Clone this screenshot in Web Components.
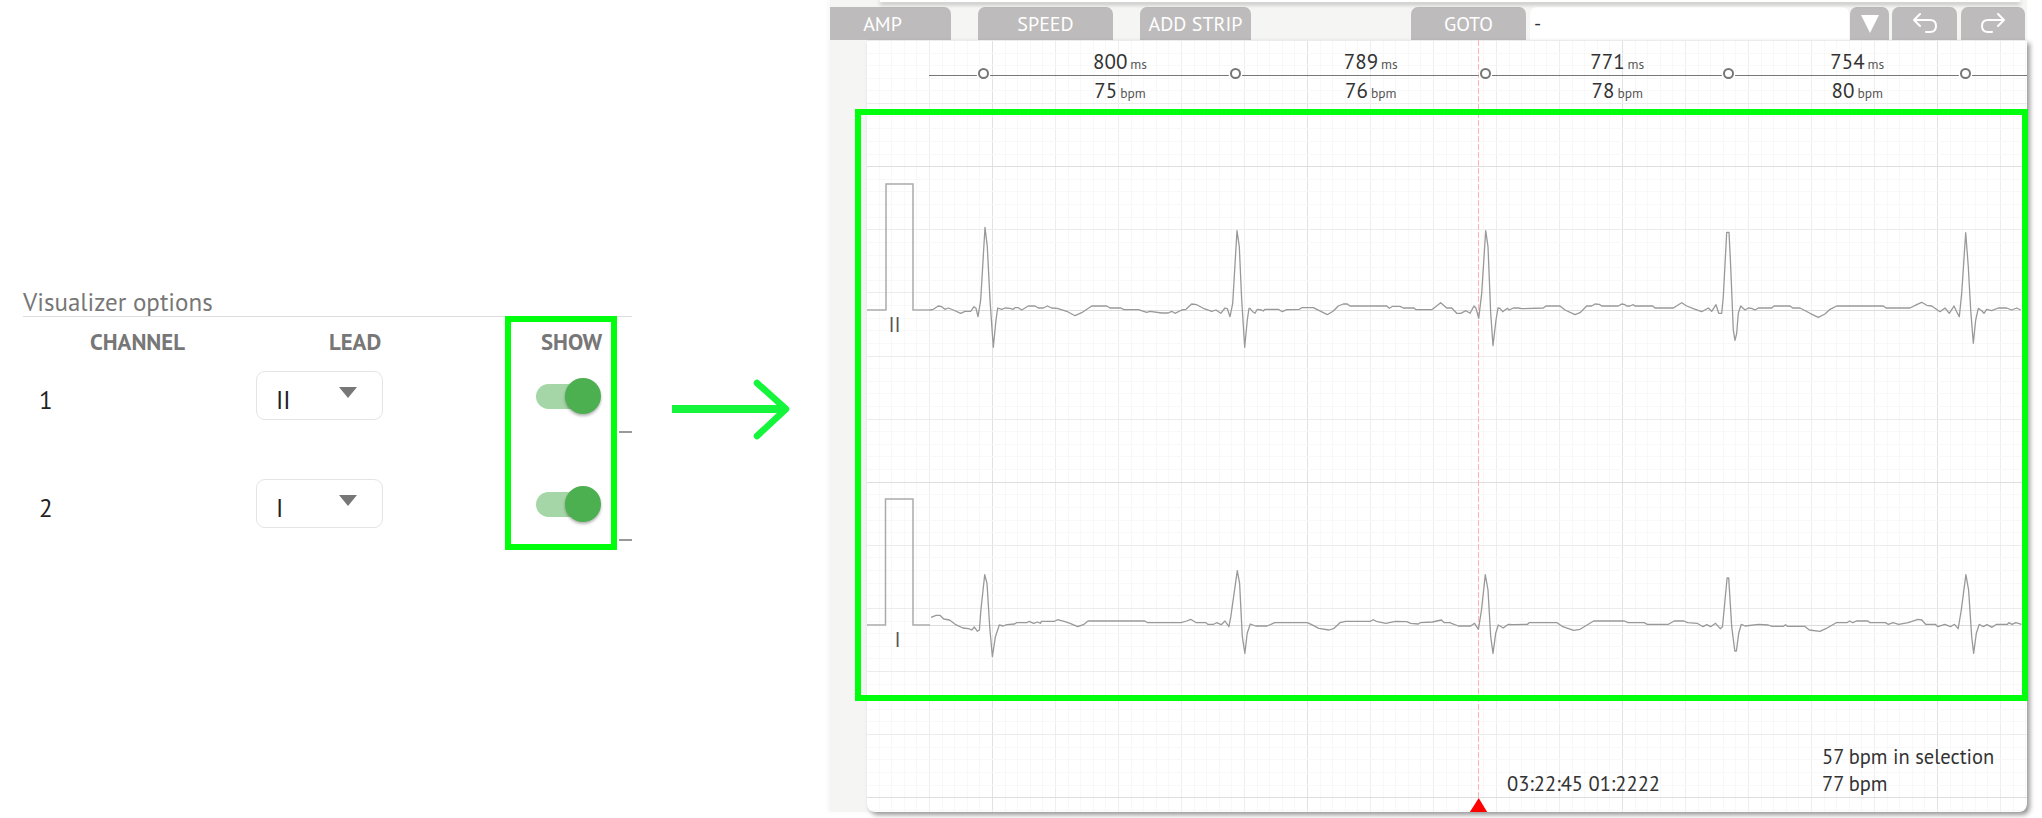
<!DOCTYPE html>
<html>
<head>
<meta charset="utf-8">
<title>Visualizer options</title>
<style>
  html, body { margin: 0; background: #fff; }
  body { width: 2042px; height: 818px; overflow: hidden; font-family: "PT Sans", Lato, sans-serif; }
</style>
</head>
<body>
<app-page>
  <viz-options slot="options" title="Visualizer options">
    <viz-row channel="1" lead="II"></viz-row>
    <viz-row channel="2" lead="I"></viz-row>
  </viz-options>
  <green-arrow slot="arrow"></green-arrow>
  <ecg-viewer slot="viewer">
    <ecg-toolbar slot="toolbar"></ecg-toolbar>
    <ecg-chart slot="chart"></ecg-chart>
  </ecg-viewer>
</app-page>

<script>
const FONT = '"PT Sans", Lato, sans-serif'

class appPage extends HTMLElement {
  constructor() {
    super()
    this.attachShadow({ mode: 'open' }).innerHTML = `
      <style>
        :host { display: flex; width: 2042px; height: 818px; font-family: ${FONT}; }
        .options { display: block; margin-left: 23px; width: 609px; padding-top: 291px; }
        .arrow { display: block; margin-left: 38px; width: 122px; padding-top: 378px; }
        .viewer { display: block; margin-left: 38px; }
      </style>
      <div class="options"><slot name="options"></slot></div>
      <div class="arrow"><slot name="arrow"></slot></div>
      <div class="viewer"><slot name="viewer"></slot></div>`
  }
}

class vizOptions extends HTMLElement {
  constructor() {
    super()
    this.attachShadow({ mode: 'open' }).innerHTML = `
      <style>
        :host { display: block; position: relative; width: 609px; }
        h2 { margin: 0; font: 400 25px/22px ${FONT}; color: #777; border-bottom: 1px solid #ddd; height: 25px; }
        .head { display: grid; grid-template-columns: 233px 280px 96px; height: 27px; padding-top: 13px;
                font: 700 22.8px/24px ${FONT}; color: #777; }
        .head span:nth-child(1) { padding-left: 67px; }
        .head span:nth-child(2) { padding-left: 73px; }
        .head span:nth-child(3) { padding-left: 5px; }
        .rows { display: flex; flex-direction: column; gap: 32px; }
        .hl { position: absolute; left: 482px; top: 25px; width: 100px; height: 222px; border: 6px solid #00ff0c; pointer-events: none; }
      </style>
      <h2>${this.getAttribute('title')}</h2>
      <div class="head"><span>CHANNEL</span><span>LEAD</span><span>SHOW</span></div>
      <div class="rows"><slot></slot></div>
      <div class="hl"></div>`
  }
}

class vizRow extends HTMLElement {
  constructor() {
    super()
    this.attachShadow({ mode: 'open' }).innerHTML = `
      <style>
        :host { display: grid; grid-template-columns: 233px 280px 83px 13px; height: 76px; font: 400 25px/24px ${FONT}; color: #222; }
        .num { padding: 31px 0 0 16px; }
        .sw { padding-top: 21px; }
        .dash { align-self: end; height: 2px; background: #999; }
      </style>
      <div class="num">${this.getAttribute('channel')}</div>
      <div><lead-select style="margin-top:14px">${this.getAttribute('lead')}</lead-select></div>
      <div class="sw"><toggle-switch></toggle-switch></div>
      <div class="dash"></div>`
  }
}

class leadSelect extends HTMLElement {
  constructor() {
    super()
    this.attachShadow({ mode: 'open' }).innerHTML = `
      <style>
        :host { display: flex; justify-content: space-between; box-sizing: border-box; width: 127px; height: 49px;
                border: 1px solid #e4e4e4; border-radius: 9px; padding: 16px 25px 0 19px; font: 400 25px/24px ${FONT}; color: #222; }
        i { width: 0; height: 0; margin-top: -1px; border-left: 9px solid transparent; border-right: 9px solid transparent; border-top: 11px solid #777; }
      </style>
      <span><slot></slot></span><i></i>`
  }
}

class toggleSwitch extends HTMLElement {
  constructor() {
    super()
    this.attachShadow({ mode: 'open' }).innerHTML = `
      <style>
        :host { display: block; position: relative; width: 65px; height: 36px; }
        .track { position: absolute; left: 0; top: 6px; width: 50px; height: 25px; border-radius: 13px; background: #a5d6a7; }
        .knob { position: absolute; left: 29px; top: 0; width: 36px; height: 36px; border-radius: 50%; background: #4caf50;
                box-shadow: 0 2px 3px rgba(0,0,0,.3); }
      </style>
      <div class="track"></div><div class="knob"></div>`
  }
}

class greenArrow extends HTMLElement {
  constructor() {
    super()
    this.attachShadow({ mode: 'open' }).innerHTML = `
      <style>:host { display: block; width: 122px; height: 62px; } svg { display: block; }</style>
      <svg width="122" height="62" viewBox="670 378 122 62" fill="none">
        <path d="M672 409H784" stroke="#14f53c" stroke-width="8"/>
        <path d="M757 383L786 409L757 436" stroke="#14f53c" stroke-width="6.5" stroke-linecap="round" stroke-linejoin="round"/>
      </svg>`
  }
}

class ecgViewer extends HTMLElement {
  constructor() {
    super()
    this.attachShadow({ mode: 'open' }).innerHTML = `
      <style>
        :host { display: flex; flex-direction: column; position: relative; width: 1197px; height: 812px;
                background: #f5f5f3; box-shadow: -2px 0 4px rgba(0,0,0,.04); }
        .top { position: absolute; left: 50px; top: 0; width: 1140px; height: 2px; background: #fff; box-shadow: 0 2px 4px rgba(0,0,0,.4); }
        .hl { position: absolute; left: 25px; top: 109px; width: 1161px; height: 580px; border: 6px solid #00ff0c; pointer-events: none; }
      </style>
      <div class="top"></div>
      <slot name="toolbar"></slot>
      <slot name="chart"></slot>
      <div class="hl"></div>`
  }
}

class toolBtn extends HTMLElement {
  constructor() {
    super()
    this.attachShadow({ mode: 'open' }).innerHTML = `
      <style>
        :host { display: flex; align-items: center; justify-content: center; height: 33px; flex: none; box-sizing: border-box;
                border-radius: 7px 7px 0 0; background: #bdbbbb; color: #fff; font: 400 20px/33px ${FONT}; }
        svg { display: block; }
        span { padding-top: 1px; }
      </style>
      <span><slot></slot></span>`
  }
}

class ecgToolbar extends HTMLElement {
  constructor() {
    super()
    this.attachShadow({ mode: 'open' }).innerHTML = `
      <style>
        :host { display: flex; height: 33px; padding-top: 7px; flex: none; }
        .in { width: 319px; margin: 0 1px 0 4px; background: #fff; border-radius: 7px 7px 0 0; box-sizing: border-box; padding-left: 4px;
              font: 400 20px/32px ${FONT}; color: #333; }
        svg { display: block; fill: none; stroke: #fff; stroke-width: 2; stroke-linecap: round; stroke-linejoin: round; }
      </style>
      <tool-btn style="width:121px;border-top-left-radius:0;padding-right:16px">AMP</tool-btn>
      <tool-btn style="width:135px;margin-left:27px">SPEED</tool-btn>
      <tool-btn style="width:111px;margin-left:27px">ADD STRIP</tool-btn>
      <tool-btn style="width:115px;margin-left:160px">GOTO</tool-btn>
      <div class="in">-</div>
      <tool-btn style="width:39px">
        <svg width="18" height="20" viewBox="0 0 18 20" style="fill:#fff;stroke:none"><path d="M0 1H18L9 19Z"/></svg>
      </tool-btn>
      <tool-btn style="width:65px;margin-left:3px">
        <svg width="26" height="22" viewBox="0 0 26 22"><path d="M8 1L2 7L8 13M2 7H18C22 7 24 9.500 24 13C24 17 22 19 18 19H14"/></svg>
      </tool-btn>
      <tool-btn style="width:64px;margin-left:4px">
        <svg width="26" height="22" viewBox="0 0 26 22"><path d="M18 1L24 7L18 13M24 7H8C4 7 2 9.500 2 13C2 17 4 19 8 19H12"/></svg>
      </tool-btn>`
  }
}

// points read off the crops, given as crop coords with origin + scale
const crop = (ox, oy, sx, sy, s) => s.trim().split(/\s+/).map(p => {
  const [x, y] = p.split(',').map(Number)
  return (ox + x / sx).toFixed(1) + ',' + (oy + y / sy).toFixed(1)
}).join(' ')

const LEAD_II = [
  crop(850, 100, 3, 3, `238,630 250,628 265,618 275,620 285,628 295,624 310,630 332,640 345,634 362,634 372,620 378,625 384,650 392,600 405,382 412,440 420,600 430,742 438,660 443,624 455,628 465,624 480,625 490,628 495,623 505,623 515,630 535,618 555,618 565,624 580,624 592,618 605,624 622,625 650,634 675,647 695,638 725,618 770,618 780,624 812,624 822,629 865,629 890,637 900,634 935,639 955,639 965,634 975,640 995,630 1008,628 1025,612 1040,614 1060,625 1085,634 1098,630 1112,640 1125,624 1132,626 1140,650 1148,610 1161,392 1168,440 1175,600 1184,742 1192,660 1197,625`),
  crop(1250, 200, 3, 3, `0,325 8,335 15,340 22,328 35,330 40,333 45,328 85,328 97,335 110,329 148,328 155,323 190,323 232,344 250,333 265,318 280,312 292,312 300,318 410,318 418,325 428,319 450,319 460,324 492,324 498,329 545,329 555,322 572,308 590,324 605,324 620,340 632,340 648,332 660,340 672,318 678,325 686,355 695,280 707,92 714,140 722,340 729,437 738,360 744,324 750,325 758,335 772,325 778,330 790,324 805,324 815,326 880,324 888,318 930,318 945,330 975,344 990,338 1010,318 1025,318 1035,312 1048,313 1055,318 1105,318 1115,312 1125,314 1130,318 1140,318 1150,314 1155,318 1200,318`),
  crop(1640, 200, 3, 3, `38,318 45,324 100,324 125,308 140,318 160,326 185,335 205,324 215,334 228,314 236,340 245,340 250,290 260,97 267,97 272,200 280,390 285,421 290,400 295,340 302,318 315,330 325,324 335,325 345,330 355,324 395,324 402,318 450,318 458,324 480,324 510,340 535,352 555,342 570,328 590,318 730,318 738,324 810,324 830,314 845,307 860,316 875,318 900,335 915,324 928,340 942,318 950,335 958,350 965,280 977,98 985,200 992,330 1000,430 1007,360 1015,325 1025,332 1032,340 1040,328 1055,332 1075,324 1100,324 1115,330 1130,324 1142,330`)
].join(' ')

const LEAD_I = [
  crop(850, 470, 2.613, 3, `212,442 225,436 235,436 245,447 260,450 275,463 295,474 310,476 318,480 325,471 333,484 338,480 342,420 352,314 358,340 365,470 372,560 380,500 390,465 400,468 410,464 430,462 435,458 462,458 468,454 480,460 490,456 498,460 500,454 535,454 542,449 560,454 575,460 595,470 610,464 622,453 770,453 778,458 865,458 880,453 890,448 905,458 930,458 935,463 950,463 958,458 970,464 980,453 990,470 995,440 1012,302 1018,340 1025,500 1032,550 1038,490 1046,462 1060,468 1090,468 1110,458 1195,458 1205,463 1225,475 1252,480 1265,475 1280,458 1295,454 1360,454 1367,449 1375,454 1400,460 1425,454 1455,455 1465,460 1485,462 1490,458 1522,456 1545,450 1553,458 1568,458`),
  crop(1440, 470, 2.605, 3, `30,460 48,468 80,468 90,460 100,478 108,420 118,314 125,360 132,500 138,550 145,490 152,465 165,474 178,463 190,464 228,463 232,458 305,458 320,470 348,481 365,478 400,453 480,453 490,458 532,458 540,463 595,463 610,453 635,453 645,458 670,460 685,470 695,464 705,470 718,460 730,476 736,470 748,324 752,324 760,470 768,543 772,543 778,490 785,463 795,468 830,463 855,465 865,469 895,469 900,464 905,469 950,469 962,480 990,484 1005,476 1032,458 1060,458 1067,453 1075,458 1085,453 1115,453 1120,458 1160,458 1168,463 1180,458 1195,463 1220,458 1245,448 1255,450 1265,463 1290,463 1297,470 1315,463 1330,470 1340,463 1350,476 1358,420 1370,314 1377,360 1385,500 1390,550 1397,490 1405,463 1415,470 1425,464 1438,472 1450,463 1478,463 1482,458 1490,463 1500,458 1515,463`)
].join(' ')

function gridLines() {
  let out = ''
  const X0 = 866, Y0 = 40, W = 2027, H = 814
  const minorX = 12.6, minorY = 12.62
  for (let i = 0; X0 + i * minorX < W; i++) {
    const x = Math.round(X0 + i * minorX) + .5
    let c = '#f8f8f8'
    if (i % 5 === 0) c = (i / 5) % 5 === 2 ? '#e2e2e2' : '#eeeeee'
    out += `<path d="M${x} ${Y0}V${H}" stroke="${c}"/>`
  }
  for (let i = 0; Y0 + i * minorY < H; i++) {
    const y = Math.round(Y0 + i * minorY) + .5
    let c = '#f8f8f8'
    if (i % 5 === 0) c = (i / 5) % 5 === 2 ? '#dedede' : '#ececec'
    out += `<path d="M867 ${y}H${W}" stroke="${c}"/>`
  }
  return out
}

class ecgChart extends HTMLElement {
  constructor() {
    super()
    this.attachShadow({ mode: 'open' }).innerHTML = `
      <style>
        :host { display: flex; flex-direction: column; justify-content: space-between; position: relative; box-sizing: border-box;
                width: 1160px; height: 774px; margin-left: 37px; background: #fff; border-radius: 0 0 8px 8px; overflow: hidden;
                box-shadow: 3px 3px 5px rgba(0,0,0,.4); }
        svg.bg { position: absolute; left: 0; top: 0; }
        .bottom { position: relative; display: flex; padding: 0 0 15px 640px; font: 400 20.500px/27px ${FONT}; color: #333; }
        .time { width: 315px; align-self: end; }
      </style>
      <svg class="bg" width="1160" height="774" viewBox="867 40 1160 774" fill="none">
        ${gridLines()}
        <path d="M929 310.500H2021M929 625.500H2021" stroke="#dcdcdc"/>
        <path d="M1478.500 40V800" stroke="#ffb4b4" stroke-dasharray="6 2"/>
        <path d="M867 310H886V184H913V310H929" stroke="#aaa" stroke-width="1.500"/>
        <path d="M867 625H885.500V499H913V625H930" stroke="#aaa" stroke-width="1.500"/>
        <polyline points="${LEAD_II}" stroke="#999" stroke-width="1.300" stroke-linejoin="round"/>
        <polyline points="${LEAD_I}" stroke="#999" stroke-width="1.300" stroke-linejoin="round"/>
        <text x="888.500" y="332" font-family="${FONT.replace(/"/g, "'")}" font-size="21" fill="#555" stroke="none">II</text>
        <text x="894.500" y="647" font-family="${FONT.replace(/"/g, "'")}" font-size="21" fill="#555" stroke="none">I</text>
        <path d="M1478.700 798L1489 815H1468Z" fill="#ff0000"/>
      </svg>
      <rr-strip>
        <rr-cell ms="800" bpm="75" style="width:252px"></rr-cell>
        <rr-cell ms="789" bpm="76" style="width:249.500px"></rr-cell>
        <rr-cell ms="771" bpm="78" style="width:243.500px"></rr-cell>
        <rr-cell ms="754" bpm="80" style="width:236.500px"></rr-cell>
        <rr-cell end style="width:40px"></rr-cell>
      </rr-strip>
      <div class="bottom">
        <div class="time">03:22:45 01:2222</div>
        <div><div>57 bpm in selection</div><div>77 bpm</div></div>
      </div>`
  }
}

class rrStrip extends HTMLElement {
  constructor() {
    super()
    this.attachShadow({ mode: 'open' }).innerHTML = `
      <style>
        :host { display: flex; position: relative; height: 71px; padding: 7px 0 0 117px; box-sizing: content-box; }
        .ln { position: absolute; left: 62px; right: 0; top: 35px; height: 1px; background: #777; }
      </style>
      <div class="ln"></div><slot></slot>`
  }
}

class rrCell extends HTMLElement {
  constructor() {
    super()
    const end = this.hasAttribute('end')
    this.attachShadow({ mode: 'open' }).innerHTML = `
      <style>
        :host { display: block; position: relative; flex: none; padding-left: 20px; box-sizing: border-box; text-align: center;
                font: 400 21px/30px ${FONT}; color: #333; }
        small { font-size: 13.500px; color: #555; margin-left: 3px; }
        i { position: absolute; left: -6px; top: 21px; box-sizing: border-box; width: 11px; height: 11px; border-radius: 50%;
            border: 2px solid #777; background: #fff; box-shadow: 0 0 0 1.500px #fff; }
        div { height: 30px; }
      </style>
      <i></i>
      ${end ? '' : `<div>${this.getAttribute('ms')}<small>ms</small></div>
      <div style="margin-top:-1px">${this.getAttribute('bpm')}<small>bpm</small></div>`}`
  }
}

customElements.define('tool-btn', toolBtn)
customElements.define('rr-cell', rrCell)
customElements.define('rr-strip', rrStrip)
customElements.define('lead-select', leadSelect)
customElements.define('toggle-switch', toggleSwitch)
customElements.define('viz-row', vizRow)
customElements.define('viz-options', vizOptions)
customElements.define('green-arrow', greenArrow)
customElements.define('ecg-toolbar', ecgToolbar)
customElements.define('ecg-chart', ecgChart)
customElements.define('ecg-viewer', ecgViewer)
customElements.define('app-page', appPage)
</script>
</body>
</html>
